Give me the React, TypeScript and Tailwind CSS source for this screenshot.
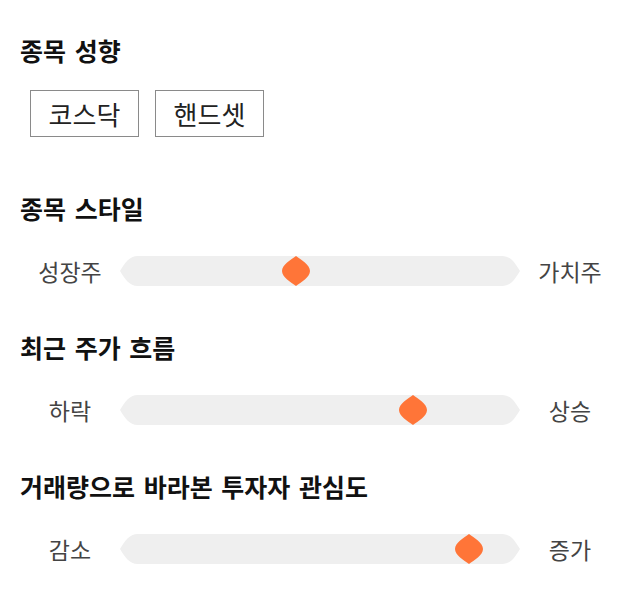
const sliders = [
  { title: "종목 스타일", left: "성장주", right: "가치주", value: 44 },
  { title: "최근 주가 흐름", left: "하락", right: "상승", value: 73.25 },
  { title: "거래량으로 바라본 투자자 관심도", left: "감소", right: "증가", value: 87.25 },
];

function Track({ value }: { value: number }) {
  return (
    <div className="relative h-[30px] w-[400px]">
      <svg width="400" height="30" viewBox="0 0 400 30" className="block">
        <path
          d="M18 0 H382 C391 0 395 7 400 15 C395 23 391 30 382 30 H18 C9 30 5 23 0 15 C5 7 9 0 18 0 Z"
          fill="#efefef"
        />
      </svg>
      <svg
        width="28"
        height="30"
        viewBox="0 0 28 30"
        className="absolute top-0 -translate-x-1/2"
        style={{ left: `${value}%` }}
      >
        <path
          d="M14 0 C19 4 28 8.5 28 15 C28 21.5 19 26 14 30 C9 26 0 21.5 0 15 C0 8.5 9 4 14 0 Z"
          fill="#ff7538"
        />
      </svg>
    </div>
  );
}

export default function App() {
  return (
    <div
      className="min-h-screen bg-white px-5 pt-[34px] text-[#111]"
      style={{ fontFamily: '"Noto Sans CJK KR", "Noto Sans", sans-serif' }}
    >
      <h2 className="text-[25px] leading-[32px] font-bold [word-spacing:3px]">종목 성향</h2>
      <div className="mt-[24px] ml-[10px] flex gap-4">
        {["코스닥", "핸드셋"].map((label) => (
          <button
            key={label}
            className="flex h-[47px] w-[109px] items-center justify-center border border-[#8a8a8a] text-[26px] text-[#222]"
          >
            {label}
          </button>
        ))}
      </div>

      {sliders.map((s, i) => (
        <div key={s.title} className={i === 0 ? "mt-[55px]" : "mt-[45px]"}>
          <h2 className="text-[25px] leading-[32px] font-bold [word-spacing:3px]">{s.title}</h2>
          <div className="mt-[32px] flex h-[30px] items-center">
            <span className="w-[100px] text-center text-[23px] text-[#444]">{s.left}</span>
            <Track value={s.value} />
            <span className="w-[100px] text-center text-[23px] text-[#444]">{s.right}</span>
          </div>
        </div>
      ))}
    </div>
  );
}
